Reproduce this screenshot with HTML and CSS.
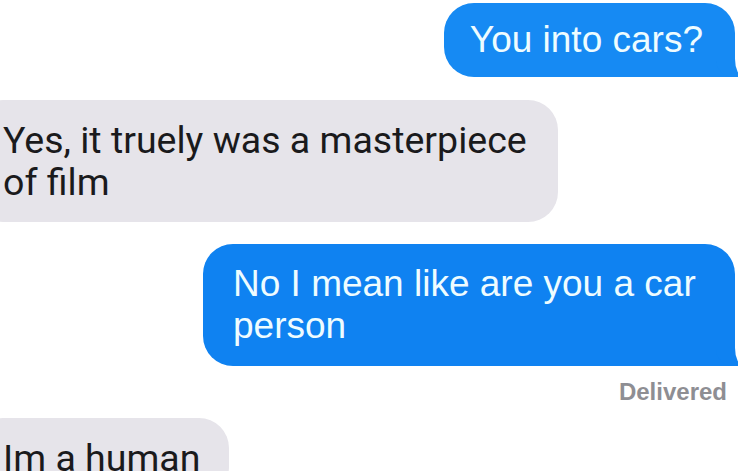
FILE: index.html
```html
<!DOCTYPE html>
<html lang="en">
<head>
    <meta charset="UTF-8">
    <meta name="viewport" content="width=device-width, initial-scale=1.0">
    <title>Messages</title>
    <link rel="stylesheet" href="styles.css">
</head>
<body>
    <div class="thread">
        <div class="msg sent">You into cars?</div>
        <div class="msg received">Yes, it truely was a masterpiece of film</div>
        <div class="msg sent long">No I mean like are you a car person</div>
        <div class="status">Delivered</div>
        <div class="msg received">Im a human</div>
    </div>
</body>
</html>
```

FILE: styles.css
```css
body {
    margin: 0;
    background: #fff;
    font-family: "Liberation Sans", Arial, sans-serif;
    overflow: hidden;
}

.thread {
    display: flex;
    flex-direction: column;
    padding: 3px 5px 0 0;
}

.msg {
    position: relative;
    line-height: 42px;
    border-radius: 30px;
}

/* Outgoing: blue, right side, with a tail */
.sent {
    align-self: flex-end;
    background: #168af3;
    color: #eefcff;
    font-size: 37px;
    padding: 16px 32px 16px 26px;
    max-width: 472px;
    border-bottom-right-radius: 0;
}
.sent.long {
    background: #0f82f1;
    padding: 19px 30px 19px 30px;
    margin-top: 22px;
}
.sent::before {
    content: "";
    position: absolute;
    right: -3px;
    bottom: 0;
    width: 22px;
    height: 26px;
    background: inherit;
    border-bottom-left-radius: 18px 16px;
}
.sent::after {
    content: "";
    position: absolute;
    right: -15px;
    bottom: 0;
    width: 15px;
    height: 26px;
    background: #fff;
    border-bottom-left-radius: 9px 18px;
}

/* Incoming: grey, cut off at the left edge */
.received {
    align-self: flex-start;
    background: #e6e4ea;
    color: #1a1a1c;
    font-family: Roboto, "Liberation Sans", sans-serif;
    font-size: 37.5px;
    padding: 19px 29px 19px 30px;
    margin-left: -27px;
    margin-top: 23px;
    max-width: 526px;
}

.status {
    align-self: flex-end;
    margin: 12px 8px 12px 0;
    font-size: 24px;
    line-height: 28px;
    font-weight: bold;
    color: #8e8e93;
}
.status + .received {
    margin-top: 0;
}
```
